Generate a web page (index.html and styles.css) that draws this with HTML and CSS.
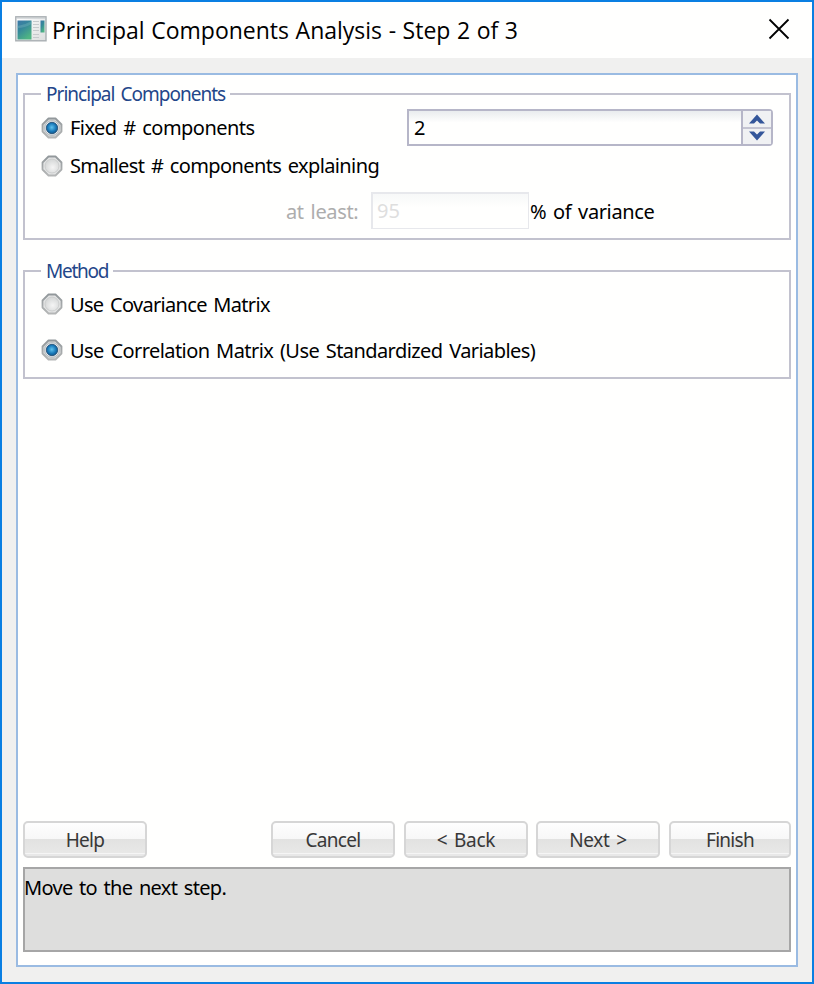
FILE: index.html
```html
<!DOCTYPE html>
<html lang="en">
<head>
<meta charset="utf-8">
<title>Principal Components Analysis - Step 2 of 3</title>
<link rel="stylesheet" href="styles.css">
</head>
<body>
<div class="window">
  <header class="titlebar">
    <svg class="app-icon" width="32" height="26" viewBox="0 0 32 26">
      <defs>
        <linearGradient id="teal" x1="0" y1="0" x2="0.6" y2="1"><stop offset="0" stop-color="#3d78a8"/><stop offset="0.45" stop-color="#35889a"/><stop offset="1" stop-color="#4fb583"/></linearGradient>
        <linearGradient id="paper" x1="0" y1="0" x2="1" y2="1"><stop offset="0" stop-color="#fff"/><stop offset="1" stop-color="#dcdede"/></linearGradient>
      </defs>
      <rect x="0.8" y="0.8" width="30.2" height="24" fill="url(#paper)" stroke="#a9afb2" stroke-width="1.4"/>
      <path d="M1.5 2h29" stroke="#bcc2c5"/>
      <rect x="2.5" y="4.5" width="14" height="19" fill="url(#teal)"/>
      <path d="M2.500 10Q10 9 16.500 5v3Q10 12 2.500 12z" fill="#79b5bf" opacity=".4"/>
      <path d="M18 5.500h6M18 8.500h6M18 11.500h6M18 14.500h6M18 18.500h6M18 21.500h6" stroke="#c6cacc"/>
      <rect x="25.500" y="4.500" width="4" height="12" fill="url(#teal)"/>
    </svg>
    <h1 class="title">Principal Components Analysis - Step 2 of 3</h1>
    <svg class="close" width="22" height="22" viewBox="0 0 22 22"><path d="M1.500 1.500l19 19M20.500 1.500l-19 19" stroke="#000" stroke-width="1.800"/></svg>
  </header>
  <main class="panel">
    <svg width="0" height="0" class="defs">
      <defs>
        <linearGradient id="rim" x1="0" y1="0" x2="0" y2="1"><stop offset="0" stop-color="#92989b"/><stop offset="1" stop-color="#b4b6b6"/></linearGradient>
        <radialGradient id="well" cx="0.55" cy="0.6" r="0.6"><stop offset="0" stop-color="#f5f5f5"/><stop offset="1" stop-color="#d4d6d6"/></radialGradient>
        <radialGradient id="bead" cx="0.48" cy="0.45" r="0.6"><stop offset="0" stop-color="#5fc3ee"/><stop offset="0.6" stop-color="#1878b8"/><stop offset="1" stop-color="#14507f"/></radialGradient>
        <g id="radio-off">
          <path d="M7.500 1.500h7L20.500 7.500v7L14.500 20.500h-7L1.500 14.500v-7z" fill="#e4e5e5" stroke="url(#rim)" stroke-width="1.800" stroke-linejoin="round"/>
          <circle cx="11" cy="11" r="7" fill="url(#well)" stroke="#cccece"/>
        </g>
        <g id="radio-on">
          <path d="M7.500 1.500h7L20.500 7.500v7L14.500 20.500h-7L1.500 14.500v-7z" fill="#d4d6d6" stroke="url(#rim)" stroke-width="1.800" stroke-linejoin="round"/>
          <circle cx="11" cy="11" r="7.300" fill="#e8edf0" stroke="#b4babe" stroke-width="1"/>
          <circle cx="11" cy="11" r="5.700" fill="url(#bead)" stroke="#1b4a72" stroke-width="0.800"/>
        </g>
      </defs>
    </svg>
    <fieldset class="group components">
      <legend><span class="t-pc">Principal Components</span></legend>
      <div class="row row-fixed">
        <svg class="radio" viewBox="0 0 22 22"><use href="#radio-on"/></svg>
        <span class="label t-fixed">Fixed # components</span>
        <div class="spinner">
          <div class="spinner-value">2</div>
          <div class="spinner-buttons">
            <div class="step"><svg width="16" height="10" viewBox="0 0 16 10"><path d="M0 9.500L8 0.500l8 9h-5L8 6.500 5 9.500z" fill="#34569a"/></svg></div>
            <div class="step"><svg width="16" height="10" viewBox="0 0 16 10"><path d="M0 0.500L8 9.500l8-9h-5L8 3.500 5 0.500z" fill="#34569a"/></svg></div>
          </div>
        </div>
      </div>
      <div class="row row-smallest">
        <svg class="radio" viewBox="0 0 22 22"><use href="#radio-off"/></svg>
        <span class="label t-small">Smallest # components explaining</span>
      </div>
      <div class="row row-variance">
        <span class="at-least">at least:</span>
        <div class="percent">95</div>
        <span class="t-var">% of variance</span>
      </div>
    </fieldset>
    <fieldset class="group method">
      <legend><span class="t-method">Method</span></legend>
      <div class="row row-cov">
        <svg class="radio" viewBox="0 0 22 22"><use href="#radio-off"/></svg>
        <span class="label t-cov">Use Covariance Matrix</span>
      </div>
      <div class="row row-cor">
        <svg class="radio" viewBox="0 0 22 22"><use href="#radio-on"/></svg>
        <span class="label t-cor">Use Correlation Matrix (Use Standardized Variables)</span>
      </div>
    </fieldset>
    <div class="buttons">
      <div class="button help">Help</div>
      <div class="button cancel">Cancel</div>
      <div class="button back">&lt; Back</div>
      <div class="button next">Next &gt;</div>
      <div class="button finish">Finish</div>
    </div>
    <div class="status"><span class="t-status">Move to the next step.</span></div>
  </main>
</div>
</body>
</html>
```
FILE: styles.css
```css
* { box-sizing: border-box; }
body { margin: 0; }
.window {
  width: 814px; height: 984px;
  border: 2px solid #0a7fe2;
  background: #f0f0ef;
  font: 20px/24px "Noto Sans", sans-serif;
  word-spacing: 2px;
  color: #000;
  white-space: nowrap;
}
.titlebar {
  height: 56px;
  display: flex; align-items: center;
  padding: 0 22px 0 13px;
  background: #fffffe;
}
.app-icon { margin-bottom: 2px; }
.title {
  flex: 1;
  margin: 0 0 0 5px;
  font: 400 23px/30px "Open Sans", sans-serif;
  word-spacing: 0.6px;
}
.close { margin-bottom: 2px; }
.panel {
  width: 782px; height: 894px;
  margin: 15px 0 0 14px;
  padding: 7px 5px 13px;
  border: 2px solid #9abbe2;
  background: #fffffe;
  display: flex; flex-direction: column;
}
.defs { display: block; flex: none; position: absolute; }
.group {
  margin: 0; padding: 0 16px;
  border: 2px solid #c2c2ce;
  min-width: 0;
}
.group legend { padding: 0 5px; color: #234689; height: 24px; font-size: 19px; }
.components { height: 158px; padding-top: 3px; }
.method { height: 120px; margin-top: 19px; }
.row { display: flex; align-items: center; }
.radio { width: 22px; height: 22px; flex: none; }
.label { margin-left: 7px; }
.t-pc { letter-spacing: -0.98px; }
.t-method { letter-spacing: -1.25px; }
.t-fixed { letter-spacing: -0.54px; }
.t-small { letter-spacing: -0.62px; padding-top: 1px; }
.t-cov { letter-spacing: -0.68px; padding-top: 2px; }
.t-cor { letter-spacing: -0.57px; padding-top: 2px; }
.t-status { letter-spacing: -0.68px; margin-left: -1px; }
.row-fixed { height: 37px; }
.row-smallest { height: 39px; }
.row-variance { height: 37px; margin-top: 7px; }
.row-cov { height: 42px; }
.row-cor { height: 50px; }
.spinner { display: flex; width: 366px; height: 37px; margin-left: auto; border: 2px solid #b6b6c8; border-radius: 0 4px 4px 0; }
.spinner-value { flex: 1; padding: 5px 5px 0; background: linear-gradient(#e9ecee, #fffffe 35%); }
.spinner-buttons { width: 30px; border-left: 2px solid #b6b6c8; display: flex; flex-direction: column; }
.step { flex: 1; display: flex; align-items: center; justify-content: center; background: #f0f1f3; }
.step + .step { border-top: 2px solid #c4c4d2; }
.at-least { width: 73px; margin-left: 245px; padding-top: 2px; letter-spacing: -0.35px; color: #adadad; }
.percent { width: 158px; height: 37px; margin-left: 12px; padding: 5px 4px; border: 2px solid #e7e8ec; border-right-width: 1px; border-bottom-width: 1px; color: #dedede; background: linear-gradient(#f7f8f8, #fffffe 40%); }
.t-var { margin-left: 1px; padding-top: 2px; letter-spacing: -0.38px; }
.buttons { display: flex; gap: 9px; margin-top: auto; }
.button {
  width: 124px; height: 37px;
  border: 2px solid #d6d6d6; border-radius: 5px;
  background: linear-gradient(#fefefe, #f7f7f7 50%, #e2e2e1 50%, #e8e8e7 90%, #f5f5f5 90%, #f5f5f5 93%, #e8e8e8 93%);
  color: #383838;
  font-size: 19px; line-height: 34px; text-align: center;
  letter-spacing: -0.7px;
}
.help { margin-right: auto; }
.back { margin-right: -1px; }
.back, .next { letter-spacing: -0.3px; }
.finish { width: 122px; }
.status { height: 85px; margin-top: 9px; padding-top: 7px; border: 2px solid #a6a6a6; background: #dededd; }
```
